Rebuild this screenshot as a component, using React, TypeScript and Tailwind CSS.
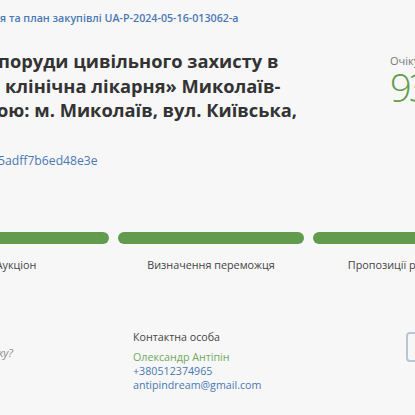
export default function App() {
  const stages = [
    { label: "Аукціон" },
    { label: "Визначення переможця" },
    { label: "Пропозиції розглянуті" },
  ];

  return (
    <div
      className="relative w-[415px] h-[415px] overflow-hidden bg-[#f7f7f7] text-[#333]"
      style={{ fontFamily: '"Open Sans", "Noto Sans", sans-serif' }}
    >
      <div className="pt-[10px] text-[10.7px] leading-[16px] font-semibold text-[#4a78b5] whitespace-nowrap">
        я та план закупівлі UA-P-2024-05-16-013062-a
      </div>

      <div className="flex mt-[23px]">
        <div className="w-[390px] shrink-0">
          <h1 className="text-[18.3px] leading-[24.5px] font-bold text-[#333] whitespace-nowrap">
            <div className="ml-[-2px]">поруди цивільного захисту в</div>
            <div className="pl-[5px]">клінічна лікарня» Миколаїв-</div>
            <div className="ml-[-3px]">ою: м. Миколаїв, вул. Київська,</div>
          </h1>
          <div className="mt-[29px] ml-[-2px] text-[12.2px] leading-[18px] text-[#4a78b5] whitespace-nowrap">
            5adff7b6ed48e3e
          </div>
        </div>
        <div className="shrink-0 whitespace-nowrap">
          <div className="mt-[3px] text-[11px] leading-[18px] text-[#777]">Очікувана вартість</div>
          <div className="mt-[-2px] text-[38px] leading-[38px] font-light tracking-[-3px] text-[#5e9d49]">
            93 000 000,00
          </div>
        </div>
      </div>

      <div className="flex gap-[9px] ml-[-77px] mt-[62px]">
        {stages.map((s) => (
          <div key={s.label} className="w-[186px] shrink-0 flex flex-col items-center">
            <div className="w-full h-[12px] rounded-full bg-[#629b4d]" />
            <div className="mt-[13px] text-[10.8px] leading-[16px] text-[#444] whitespace-nowrap">
              {s.label}
            </div>
          </div>
        ))}
      </div>

      <div className="flex mt-[57px]">
        <div className="w-[133px] shrink-0 pt-[16px]">
          <div className="ml-[-2px] text-[11px] leading-[14px] italic text-[#888] whitespace-nowrap">ку?</div>
        </div>
        <div className="w-[273px] shrink-0 text-[10.7px] leading-[14px] whitespace-nowrap">
          <div className="text-[#444] mb-[6px]">Контактна особа</div>
          <div className="text-[#72a862]">Олександр Антіпін</div>
          <div className="text-[#4a78b5]">+380512374965</div>
          <div className="text-[#4a78b5]">antipindream@gmail.com</div>
        </div>
        <div className="shrink-0 mt-[2px] w-[120px] h-[30px] border-2 border-[#b9c6d6] rounded-[4px]" />
      </div>
    </div>
  );
}
